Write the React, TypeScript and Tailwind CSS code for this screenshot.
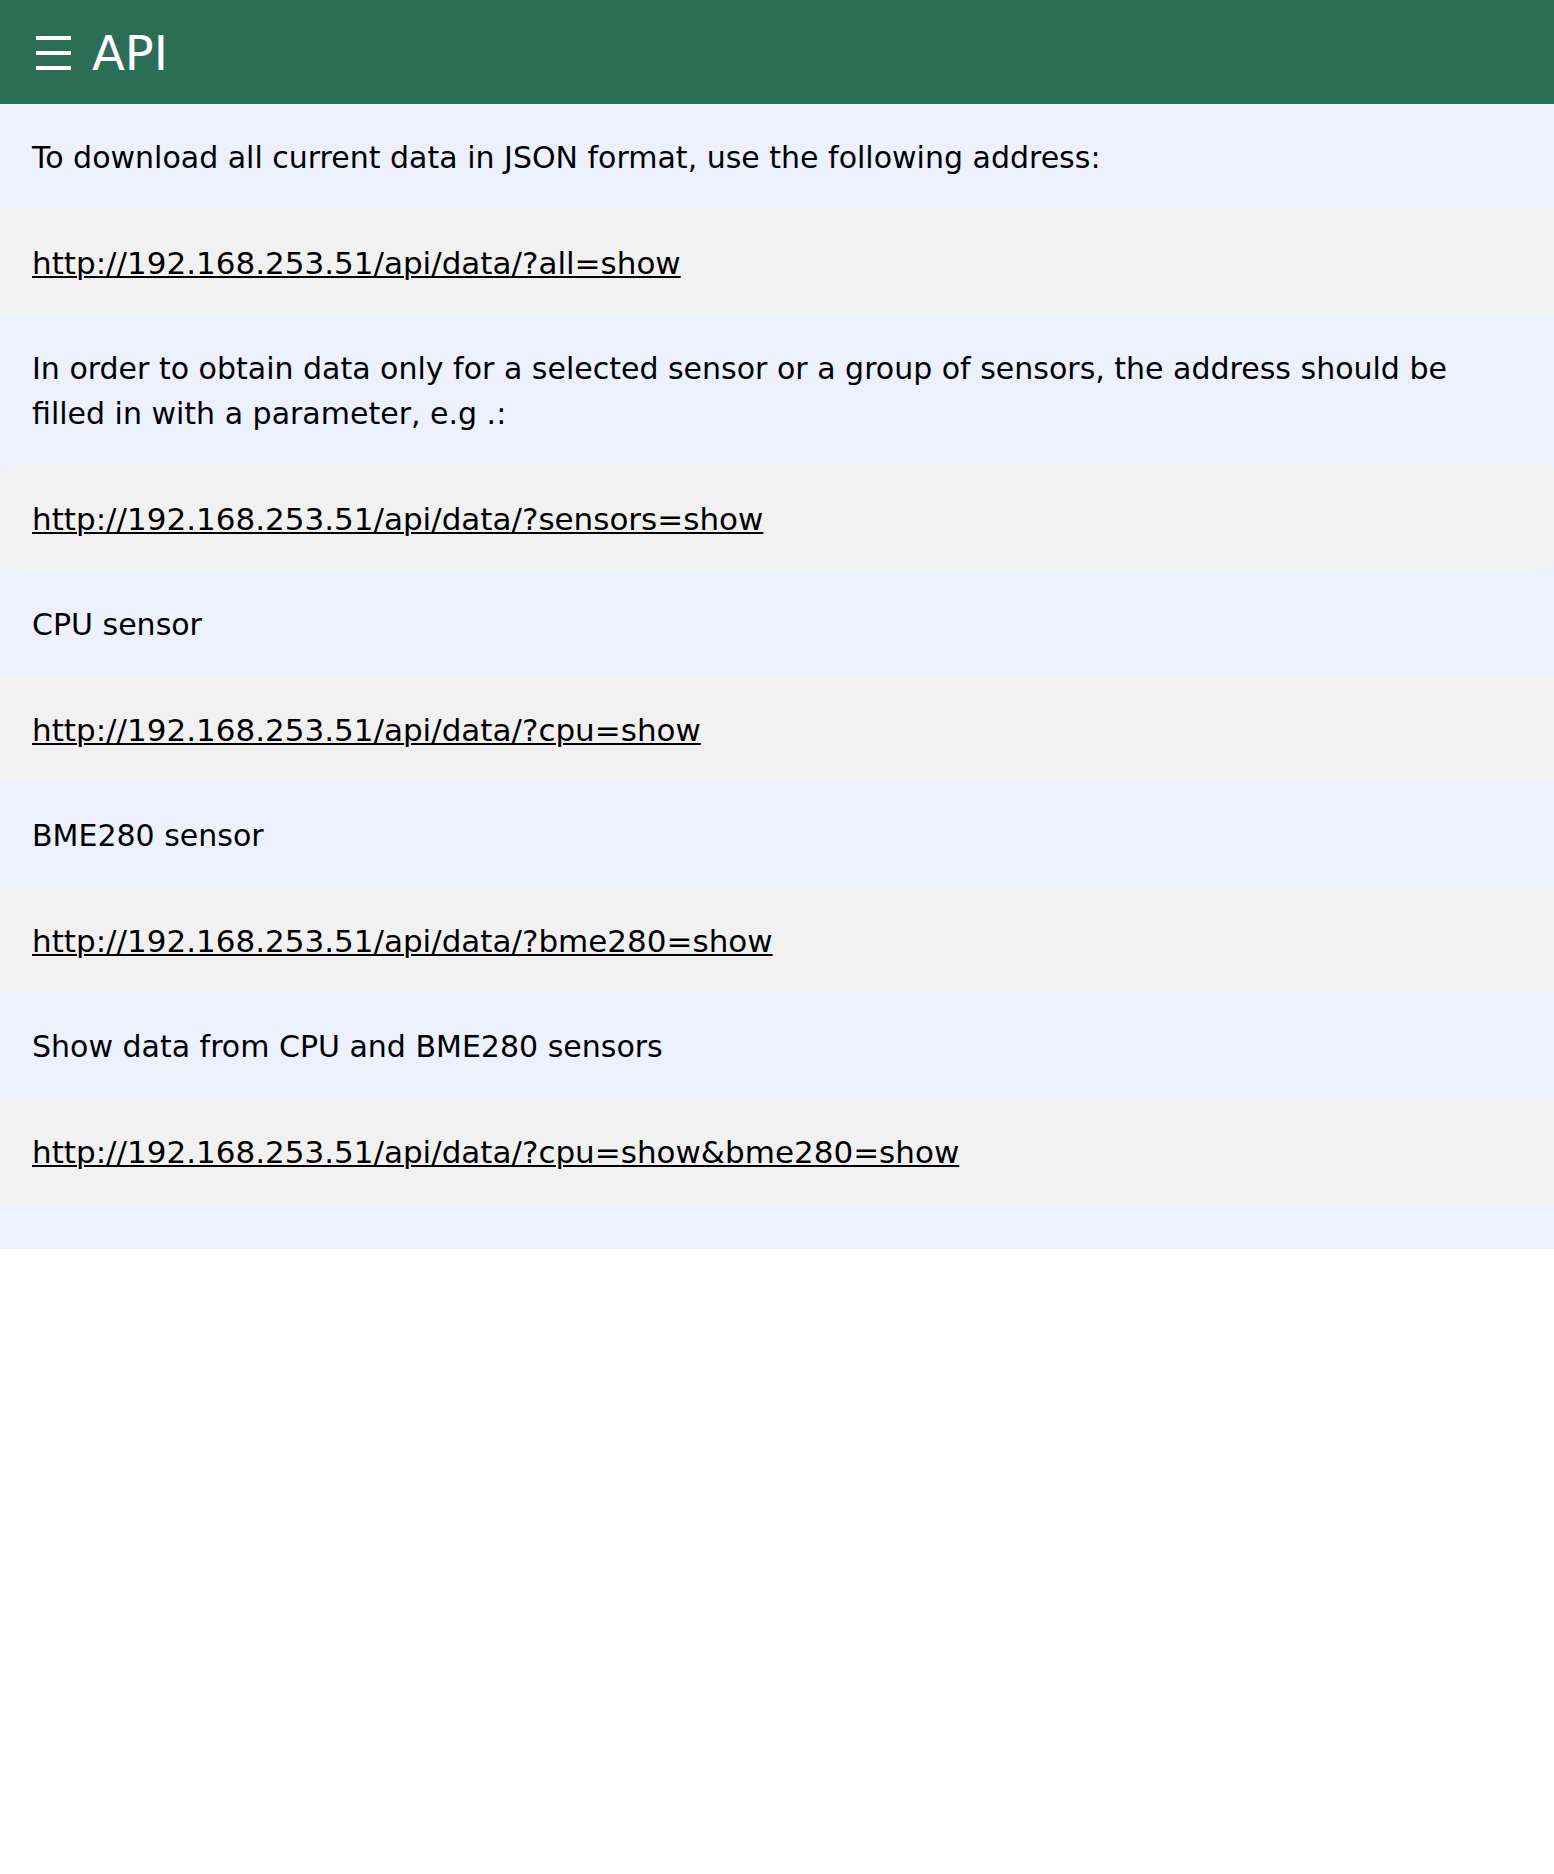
const host = "http://192.168.253.51/api/data/";

const sections = [
  { text: "To download all current data in JSON format, use the following address:", query: "?all=show" },
  {
    text: "In order to obtain data only for a selected sensor or a group of sensors, the address should be filled in with a parameter, e.g .:",
    query: "?sensors=show",
    rounded: true,
  },
  { text: "CPU sensor", query: "?cpu=show" },
  { text: "BME280 sensor", query: "?bme280=show" },
  { text: "Show data from CPU and BME280 sensors", query: "?cpu=show&bme280=show" },
];

export default function App() {
  return (
    <div className="font-['DejaVu_Sans',sans-serif] text-black">
      <header className="flex items-center gap-[21px] bg-[#2b6e55] px-9 pt-[17px] pb-[15px] text-white">
        <button type="button" aria-label="Open menu" className="flex">
          <svg width="35" height="34" viewBox="0 0 35 34" fill="none" stroke="currentColor" strokeWidth="4">
            <path d="M0 2H35M0 17H35M0 32H35" />
          </svg>
        </button>
        <h1 className="text-[48px] leading-[72px]">API</h1>
      </header>
      <main className="bg-[#ecf0ff] pb-[45px] text-[30px] leading-[45px]">
        {sections.map(({ text, query, rounded }) => (
          <section key={query}>
            <p className="px-8 pt-[31px] pb-[29px]">{text}</p>
            <div className={rounded ? "rounded-lg bg-[#f1f1f1] px-8 pt-8 pb-[29px]" : "bg-[#f1f1f1] px-8 pt-8 pb-[29px]"}>
              <a href={host + query} className="block text-[31px] underline decoration-2 underline-offset-2">
                {host + query}
              </a>
            </div>
          </section>
        ))}
      </main>
    </div>
  );
}
